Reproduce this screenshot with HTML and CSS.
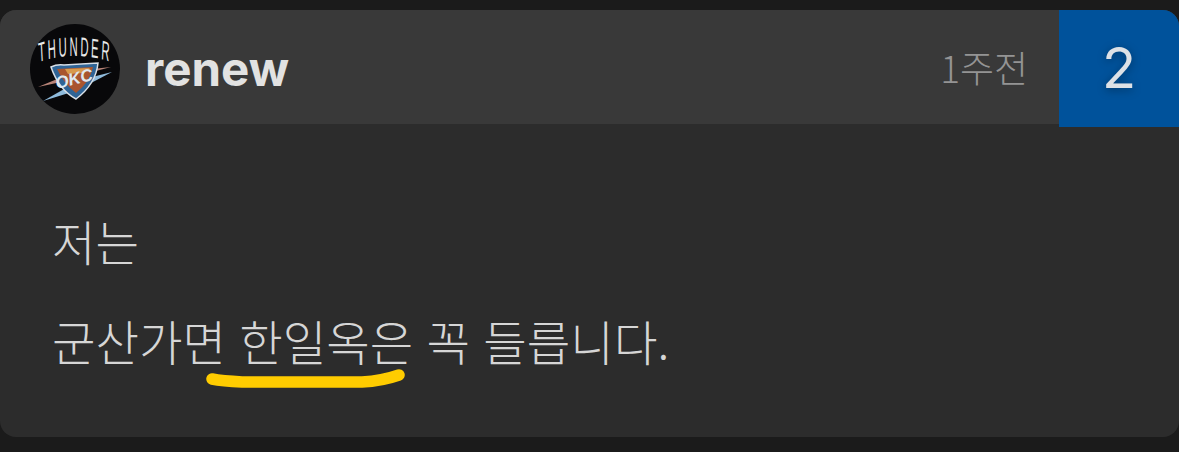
FILE: index.html
```html
<!DOCTYPE html>
<html lang="ko">
<head>
  <meta charset="UTF-8">
  <title>renew</title>
  <link rel="stylesheet" href="styles.css">
</head>
<body>

<div class="card">
  <div class="head">
    <svg class="avatar" viewBox="0 0 90 90">
      <circle cx="45" cy="45" r="45" fill="#08080a"/>
      <g transform="scale(0.42 1)">
        <path id="arc" d="M22 38 Q107 26 193 38" fill="none"/>
        <text class="logo-name"><textPath href="#arc" startOffset="50%" text-anchor="middle">THUNDER</textPath></text>
      </g>
      <path d="M8 63 L32 53 L31 58 Z" fill="#b98478"/>
      <path d="M13 77 L36 64 L42 68 Z" fill="#8fbbdc"/>
      <path d="M62 45 L81 43 L62 48 Z" fill="#b98478"/>
      <path d="M62 53 L82 48 L61 59 Z" fill="#8fbbdc"/>
      <path d="M21 43 Q27 40 34 41 L68 39 Q66 60 46 75 Q29 66 21 43 Z" fill="#2f6496" stroke="#d8dfe6" stroke-width="1.5"/>
      <path d="M27 45 L63 43 Q60 58 46 69 Q34 60 27 45 Z" fill="#a9552f"/>
      <path d="M35 45 L60 44 L54 49 L38 50 Z" fill="#d89a4c"/>
      <text class="logo-okc" x="27" y="65" transform="rotate(-14 27 65)">OKC</text>
    </svg>
    <span class="name">renew</span>
    <span class="time">1주전</span>
    <div class="num">2</div>
  </div>
  <div class="body">
    <p>저는</p>
    <p>군산가면 한일옥은 꼭 들릅니다.</p>
    <svg class="mark" viewBox="0 0 210 28">
      <path d="M10 15 Q20 17 40 18 L160 18 Q180 17 197 11" fill="none" stroke="#ffcc00" stroke-width="11.5" stroke-linecap="round"/>
    </svg>
  </div>
</div>

</body>
</html>
```

FILE: styles.css
```css
body {
  margin: 0;
  padding: 10px 0 15px;
  background: #1b1b1b;
  font-family: "Noto Sans CJK KR", "Noto Sans", sans-serif;
}
.card {
  height: 427px;
  background: #2c2c2c;
  border-radius: 16px;
  overflow: hidden;
}
.head {
  display: flex;
  align-items: center;
  height: 114px;
  padding-left: 30px;
  background: #393939;
}
.avatar {
  width: 90px;
  height: 90px;
  flex: none;
  margin-top: 4px;
}
.logo-name {
  font-family: "Liberation Sans", sans-serif;
  font-size: 27px;
  fill: #e8e8e8;
  letter-spacing: 6px;
}
.logo-okc {
  font-family: "Liberation Sans", sans-serif;
  font-size: 17px;
  font-weight: bold;
  font-style: italic;
  fill: #dfe8f0;
}
.name {
  margin-left: 25px;
  margin-top: 2px;
  font-family: Inter, "Liberation Sans", sans-serif;
  font-size: 47.5px;
  font-weight: 700;
  color: #e2e2e2;
}
.time {
  margin-left: auto;
  margin-right: 31px;
  font-size: 37px;
  font-weight: 300;
  color: #949494;
}
.num {
  align-self: flex-start;
  width: 120px;
  height: 115px;
  padding-bottom: 2px;
  flex: none;
  display: flex;
  align-items: center;
  justify-content: center;
  background: #00529b;
  color: #dde1e6;
  font-family: Inter, "Liberation Sans", sans-serif;
  font-size: 56px;
  text-shadow: 0 2px 10px rgba(0, 0, 0, 0.35);
}
.body {
  position: relative;
  padding: 87px 52px 0;
}
.body p {
  margin: 0 0 40px;
  font-size: 47.3px;
  line-height: 60px;
  font-weight: 300;
  color: #d6d6d6;
}
.mark {
  position: absolute;
  left: 202px;
  top: 240px;
  width: 210px;
  height: 28px;
}
```
